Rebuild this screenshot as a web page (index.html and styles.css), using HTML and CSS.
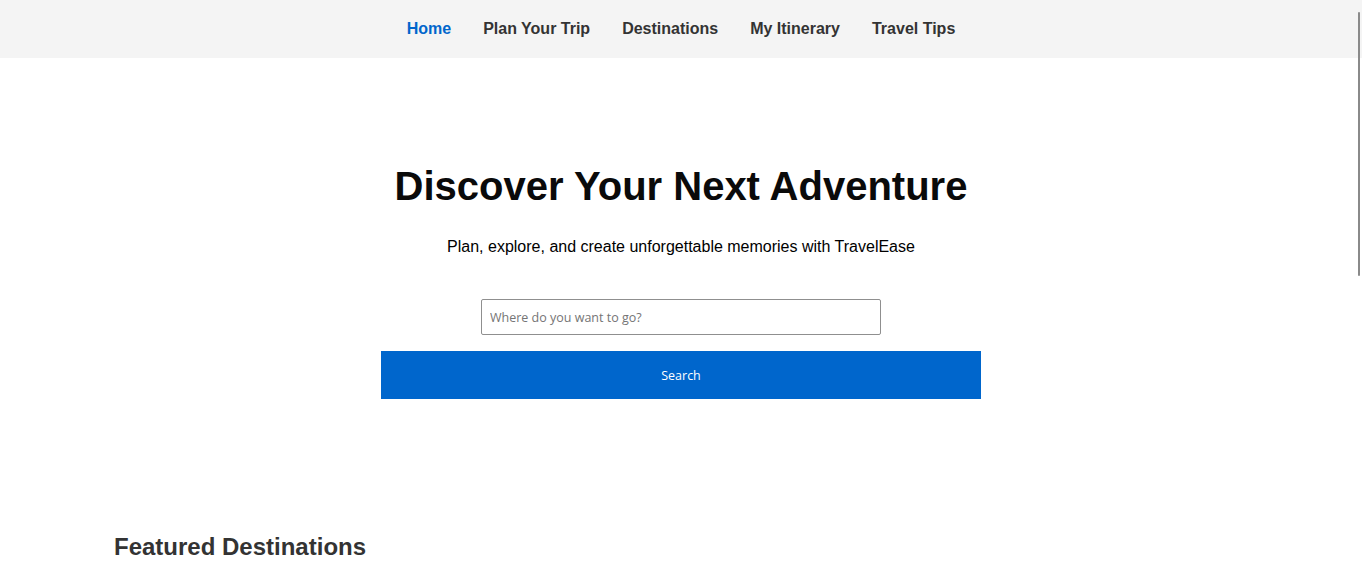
FILE: index.html
```html
<!DOCTYPE html>
<html lang="en">
<head>
<meta charset="utf-8">
<title>TravelEase</title>
<link rel="stylesheet" href="styles.css">
</head>
<body>
<nav class="topnav">
  <a class="nav-link active" href="#">Home</a>
  <a class="nav-link" href="#">Plan Your Trip</a>
  <a class="nav-link" href="#">Destinations</a>
  <a class="nav-link" href="#">My Itinerary</a>
  <a class="nav-link" href="#">Travel Tips</a>
</nav>
<section class="hero">
  <h1 class="hero-title">Discover Your Next Adventure</h1>
  <p class="hero-sub">Plan, explore, and create unforgettable memories with TravelEase</p>
  <form class="search">
    <input class="search-input" type="text" placeholder="Where do you want to go?">
    <button class="search-btn" type="button">Search</button>
  </form>
</section>
<section class="featured">
  <h2 class="featured-title">Featured Destinations</h2>
</section>
<div class="scroll-thumb" aria-hidden="true"></div>
</body>
</html>
```

FILE: styles.css
```css
html, body {
  margin: 0;
  padding: 0;
}
body {
  font-family: "Liberation Sans", Arial, sans-serif;
  background: #ffffff;
  color: #000;
}
.topnav {
  display: flex;
  justify-content: center;
  gap: 32px;
  background: #f4f4f4;
  padding: 20px 0;
}
.nav-link {
  font-size: 16px;
  line-height: 18px;
  font-weight: bold;
  color: #333333;
  text-decoration: none;
}
.nav-link.active {
  color: #0066cc;
}
.hero {
  display: flex;
  flex-direction: column;
  align-items: center;
  padding-top: 105px;
}
.hero-title {
  margin: 0;
  font-size: 40px;
  line-height: 46px;
  font-weight: bold;
  color: #0a0a0a;
}
.hero-sub {
  margin: 28px 0 0;
  font-size: 16px;
  line-height: 19px;
  color: #000;
}
.search {
  display: flex;
  flex-direction: column;
  align-items: center;
  gap: 16px;
  margin-top: 43px;
}
.search-input {
  box-sizing: border-box;
  width: 400px;
  height: 36px;
  margin: 0;
  padding: 0 8px;
  border: 1px solid #8f8f8f;
  border-radius: 2px;
  font-family: "Open Sans", "Noto Sans", sans-serif;
  font-size: 12.5px;
  color: #333;
  outline: none;
}
.search-input::placeholder {
  color: #757575;
}
.search-btn {
  width: 600px;
  height: 48px;
  margin: 0;
  border: none;
  background: #0066cc;
  color: #ffffff;
  font-family: "Open Sans", "Noto Sans", sans-serif;
  font-size: 12.5px;
  cursor: pointer;
}
.featured {
  max-width: 1200px;
  margin: 134px auto 0;
  padding: 0 33px;
  box-sizing: border-box;
  min-height: 800px;
}
.featured-title {
  margin: 0;
  font-size: 24px;
  line-height: 28px;
  font-weight: bold;
  color: #333333;
}
.scroll-thumb {
  position: fixed;
  top: 12px;
  right: 2px;
  width: 2px;
  height: 264px;
  background: #8a8a8a;
  border-radius: 1px;
}
```
